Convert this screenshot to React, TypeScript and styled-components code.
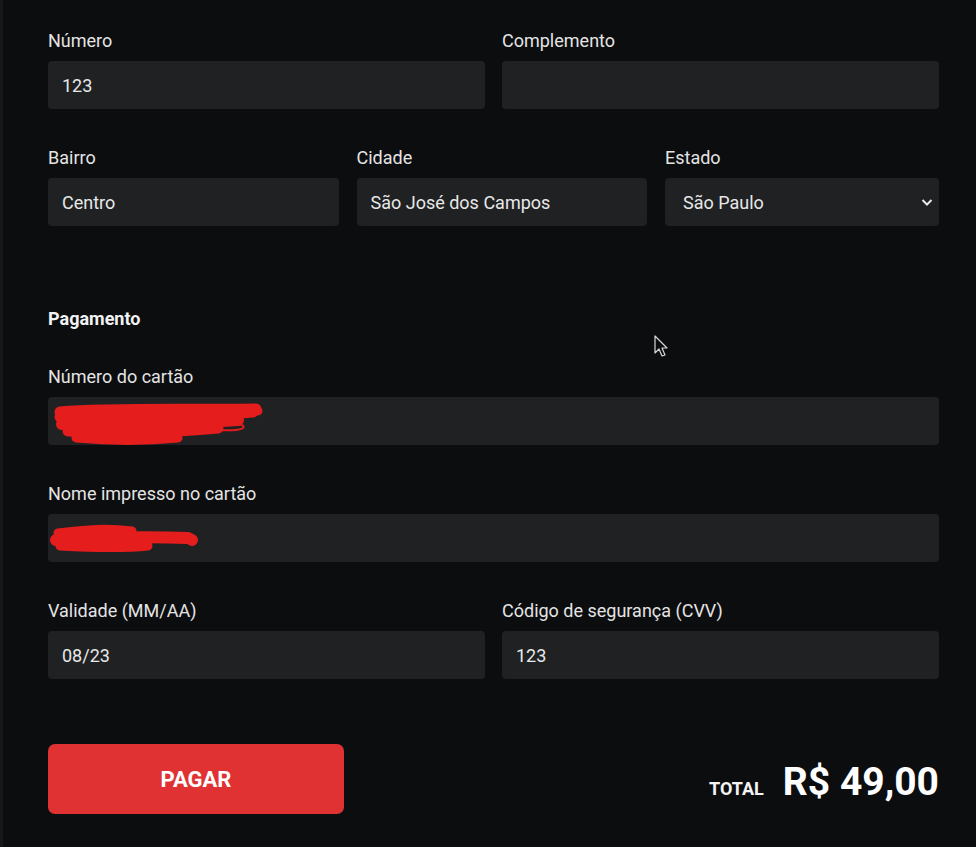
import styled, { createGlobalStyle } from "styled-components"

const GlobalStyle = createGlobalStyle`
    html, body {
        margin: 0;
        padding: 0;
        background-color: #0c0d0f;
    }
    * {
        box-sizing: border-box;
    }
`

const Page = styled.div`
    position: relative;
    min-height: 847px;
    background-color: #0c0d0f;
    border-left: solid 3px #16171a;
    padding: 31px 37px 0px 45px;
    font-family: Roboto, "Liberation Sans", sans-serif;
    color: #e6e6e6;
`

const Row = styled.div<{ cols: string; gap?: number; last?: boolean }>`
    display: grid;
    grid-template-columns: ${(props) => props.cols};
    column-gap: ${(props) => props.gap ?? 17}px;
    margin-bottom: ${(props) => (props.last ? 0 : 39)}px;
`

const Field = styled.div`
    display: flex;
    flex-direction: column;
    gap: 10px;
    min-width: 0;
`

const Label = styled.label`
    font-size: 18px;
    line-height: 20px;
    color: #e4e4e4;
`

const InputBox = styled.div`
    position: relative;
    height: 48px;
`

const TextInput = styled.input`
    width: 100%;
    height: 100%;
    border: 0;
    border-radius: 4px;
    background-color: #1f2123;
    color: #e8e8e8;
    font-family: Roboto, "Liberation Sans", sans-serif;
    font-size: 18px;
    padding: 0px 14px;
    outline: 0;
`

const Select = styled.select`
    width: 100%;
    height: 100%;
    border: 0;
    border-radius: 4px;
    background-color: #1f2123;
    color: #e8e8e8;
    font-family: Roboto, "Liberation Sans", sans-serif;
    font-size: 18px;
    padding: 0px 18px;
    outline: 0;
    appearance: none;
    -webkit-appearance: none;
`

const Chevron = styled.svg`
    position: absolute;
    right: 6px;
    top: 19px;
    pointer-events: none;
`

const Scribble = styled.svg`
    position: absolute;
    left: 0;
    top: 0;
    pointer-events: none;
`

const SectionTitle = styled.div`
    font-size: 18px;
    line-height: 20px;
    font-weight: 700;
    color: #f2f2f2;
    margin: 83px 0px 38px 0px;
`

const Footer = styled.div`
    display: flex;
    align-items: center;
    justify-content: space-between;
    margin-top: 65px;
`

const PayButton = styled.button`
    width: 296px;
    height: 70px;
    border: 0;
    border-radius: 7px;
    background-color: #e03232;
    color: #ffffff;
    font-family: Roboto, "Liberation Sans", sans-serif;
    font-size: 22px;
    font-weight: 700;
    cursor: pointer;
`

const Total = styled.div`
    display: flex;
    align-items: baseline;
    gap: 19px;
    padding-top: 5px;
`

const TotalLabel = styled.span`
    font-size: 18px;
    font-weight: 700;
    color: #f4f4f4;
`

const TotalValue = styled.span`
    font-size: 39px;
    font-weight: 700;
    color: #ffffff;
`

const Cursor = styled.svg`
    position: absolute;
    left: 651px;
    top: 335px;
`

interface InputFieldProps {
    label: string;
    value?: string;
    scribble?: React.ReactNode;
}

function InputField(props: InputFieldProps) {
    return (
        <Field>
            <Label>{props.label}</Label>
            <InputBox>
                <TextInput readOnly value={props.value ?? ''} />
                {props.scribble}
            </InputBox>
        </Field>
    )
}

function CardScribble() {
    return (
        <Scribble width="260" height="50" viewBox="0 0 260 50">
            <g fill="none" stroke="#e51d1d" strokeLinecap="round" strokeLinejoin="round">
                <path d="M12 15 C60 11 120 13 208 12" strokeWidth="11" />
                <path d="M12 20 C70 18 140 20 205 15" strokeWidth="11" />
                <path d="M14 27 C60 25 120 28 190 23" strokeWidth="12" />
                <path d="M20 34 C70 36 120 36 170 31" strokeWidth="11" />
                <path d="M28 41 C60 44 90 45 130 41" strokeWidth="9" />
                <path d="M170 12 L210 14" strokeWidth="9" />
                <path d="M150 29 C175 27 200 25 195 31 C190 35 160 33 150 31" strokeWidth="2" />
                <path d="M180 20 C190 18 200 16 205 14" strokeWidth="7" />
            </g>
        </Scribble>
    )
}

function NameScribble() {
    return (
        <Scribble width="200" height="50" viewBox="0 0 200 50">
            <g fill="none" stroke="#e51d1d" strokeLinecap="round" strokeLinejoin="round">
                <path d="M10 19 C40 15 60 14 84 17" strokeWidth="9" />
                <path d="M8 26 C50 24 90 22 140 24 L144 26" strokeWidth="12" />
                <path d="M12 32 C50 34 80 34 100 32" strokeWidth="9" />
            </g>
        </Scribble>
    )
}

export default function App() {
    return (
        <>
            <GlobalStyle />
            <Page>
                <Row cols="1fr 1fr">
                    <InputField label="Número" value="123" />
                    <InputField label="Complemento" />
                </Row>
                <Row cols="1fr 1fr 274px" gap={18} last>
                    <InputField label="Bairro" value="Centro" />
                    <InputField label="Cidade" value="São José dos Campos" />
                    <Field>
                        <Label>Estado</Label>
                        <InputBox>
                            <Select defaultValue="SP">
                                <option value="SP">São Paulo</option>
                                <option value="RJ">Rio de Janeiro</option>
                                <option value="MG">Minas Gerais</option>
                            </Select>
                            <Chevron width="12" height="10" viewBox="0 0 12 10">
                                <path d="M1.5 3 L6 7.5 L10.5 3" fill="none" stroke="#e8e8e8" strokeWidth="2" />
                            </Chevron>
                        </InputBox>
                    </Field>
                </Row>

                <SectionTitle>Pagamento</SectionTitle>

                <Row cols="1fr">
                    <InputField label="Número do cartão" scribble={<CardScribble />} />
                </Row>
                <Row cols="1fr">
                    <InputField label="Nome impresso no cartão" scribble={<NameScribble />} />
                </Row>
                <Row cols="1fr 1fr" last>
                    <InputField label="Validade (MM/AA)" value="08/23" />
                    <InputField label="Código de segurança (CVV)" value="123" />
                </Row>

                <Footer>
                    <PayButton>PAGAR</PayButton>
                    <Total>
                        <TotalLabel>TOTAL</TotalLabel>
                        <TotalValue>R$ 49,00</TotalValue>
                    </Total>
                </Footer>

                <Cursor width="14" height="24" viewBox="0 0 14 24">
                    <path d="M1 1 L1 18 L5 14 L8 21 L11 20 L8 13 L13 13 Z" fill="#0c0d0f" stroke="#d8d8d8" strokeWidth="1.2" strokeLinejoin="round" />
                </Cursor>
            </Page>
        </>
    )
}
